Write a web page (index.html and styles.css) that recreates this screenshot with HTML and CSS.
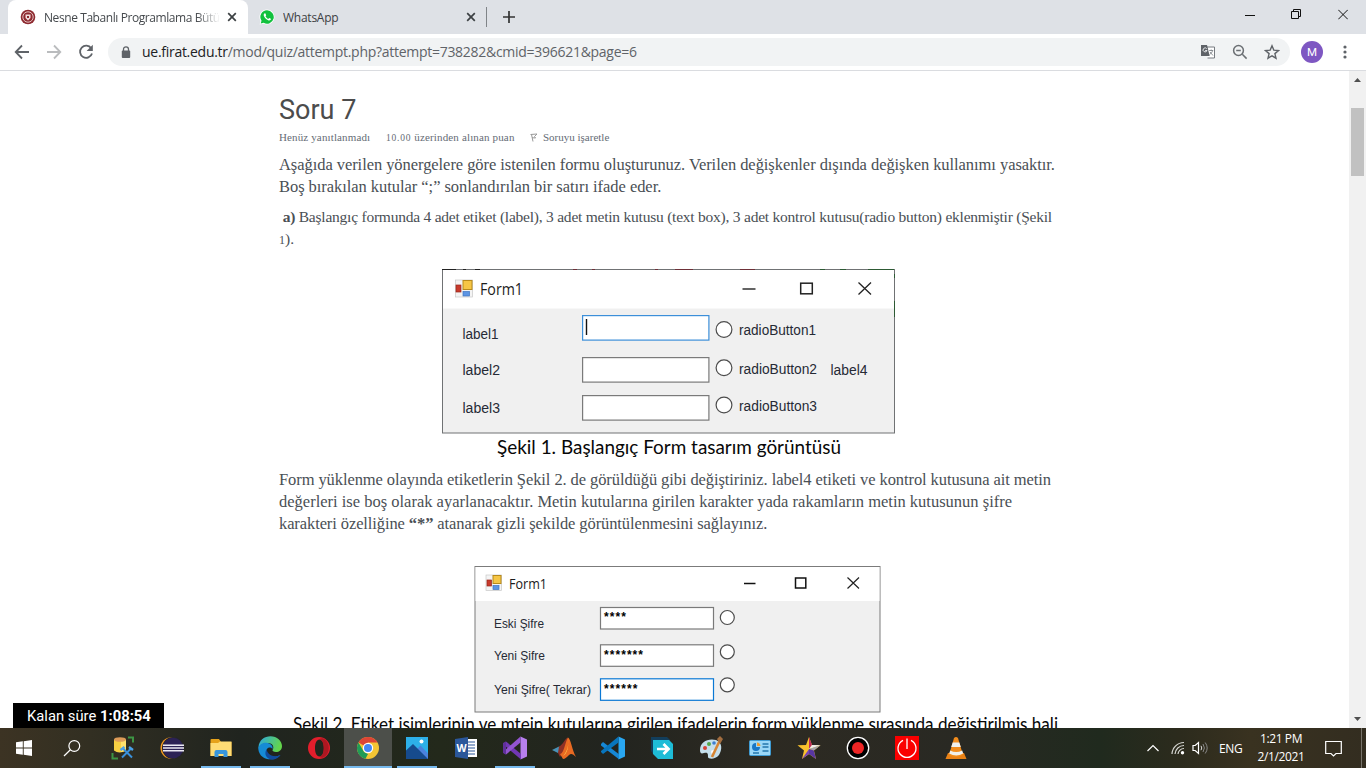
FILE: index.html
```html
<!DOCTYPE html>
<html lang="tr">
<head>
<meta charset="utf-8">
<title>Nesne Tabanlı Programlama</title>
<link rel="stylesheet" href="styles.css">
</head>
<body>
<div class="screen">
  <header class="tabs">
    <div class="tab active">
      <svg width="16" height="16" viewBox="0 0 16 16"><circle cx="8" cy="8" r="7.3" fill="#8e2a30"/><circle cx="8" cy="8" r="5.2" fill="none" stroke="#e3c2c2" stroke-width="1"/><path d="M5.5 5.5h5v3.5L8 11.5 5.5 9z" fill="#f1dede"/><path d="M7 7h2v2H7z" fill="#8e2a30"/></svg>
      <span class="tab-title fade">Nesne Tabanlı Programlama Bütü</span>
      <svg class="x" width="10" height="10" viewBox="0 0 10 10"><path d="M1.2 1.2l7.6 7.6M8.8 1.2L1.2 8.8"/></svg>
    </div>
    <div class="tab second">
      <svg width="16" height="16" viewBox="0 0 16 16"><path d="M8 .5A7.5 7.5 0 0 1 8 15.5Q6 15.500 4.500 14.700L.6 15.600 1.600 11.900A7.500 7.500 0 0 1 8 .5z" fill="#fff"/><path d="M8 1.300A6.700 6.700 0 1 1 4.700 13.800L1.700 14.600 2.500 11.700A6.700 6.700 0 0 1 8 1.300z" fill="#12c13e"/><path d="M5.700 4.300c-1.300.7-1.200 2.200-.4 3.500 1 1.700 2.500 3.100 4.300 3.600 1.300.3 2.400-.5 2.300-1.600L10.100 8.900 9.300 9.900C8 9.400 7.100 8.500 6.500 7.300L7.200 6.400 6.500 4.500z" fill="#fff"/></svg>
      <span class="tab-title wa">WhatsApp</span>
      <svg class="x" width="10" height="10" viewBox="0 0 10 10"><path d="M1.200 1.200l7.600 7.600M8.800 1.200L1.200 8.800"/></svg>
    </div>
    <i class="tab-sep"></i>
    <svg class="plus" width="12" height="12" viewBox="0 0 12 12"><path d="M6 0v12M0 6h12"/></svg>
    <div class="win-ctl">
      <svg width="10" height="11" viewBox="0 0 10 11"><path d="M0 6.500h10"/></svg>
      <svg width="11" height="11" viewBox="0 0 11 11"><path d="M.5 2.500h7v7h-7zM2.500 2.500V.5h7v7h-2"/></svg>
      <svg width="10" height="11" viewBox="0 0 10 11"><path d="M.3.800l9.500 9.500M9.800.800L.3 10.300"/></svg>
    </div>
  </header>

  <nav class="toolbar">
    <svg class="nav back" width="16" height="16" viewBox="0 0 16 16"><path d="M15 8H2M8 1.500L1.700 8 8 14.500"/></svg>
    <svg class="nav fwd" width="16" height="16" viewBox="0 0 16 16"><path d="M1 8h13M8 1.500L14.300 8 8 14.500"/></svg>
    <svg class="nav" width="16" height="16" viewBox="0 0 16 16"><path d="M13.200 4.300A6.100 6.100 0 1 0 14 9.600"/><path d="M14.800.8v6.200H8.600z" fill="#5f6368" stroke="none"/></svg>
    <div class="omnibox">
      <svg width="10" height="13" viewBox="0 0 10 13"><path d="M2.500 5.500V3.300a2.500 2.500 0 0 1 5 0v2.200" fill="none" stroke="#5f6368" stroke-width="1.300"/><rect x=".8" y="4.600" width="8.400" height="7.400" rx=".9" fill="#5f6368"/></svg>
      <span class="url"><b>ue.firat.edu.tr</b>/mod/quiz/attempt.php?attempt=738282&amp;cmid=396621&amp;page=6</span>
      <div class="omni-icons">
        <svg width="16" height="16" viewBox="0 0 16 16"><path d="M7 3h7.500v11H7.500" fill="#fff" stroke="#777b80"/><path d="M1 1h6l2.700 11H1z" fill="#5f6368"/><path d="M6.700 4.700A2 2 0 1 0 7 6.500H5.200" fill="none" stroke="#e8eaed"/><path d="M9.200 6.500h4M11.200 5.500v1M12.600 6.500c-.5 2-1.600 3-3 4M10 8l3 3.500" fill="none" stroke="#80858a" stroke-width=".9"/></svg>
        <svg width="16" height="16" viewBox="0 0 16 16"><g fill="none" stroke="#6b6f73" stroke-width="1.500"><circle cx="6.500" cy="6.500" r="4.900"/><path d="M10.300 10.300l4.300 4.300M4.200 6.500h4.600"/></g></svg>
        <svg width="16" height="16" viewBox="0 0 16 16"><path d="M8 1.800l1.800 4.300 4.700.4-3.600 3.100 1.100 4.600L8 11.800l-4 2.400 1.100-4.600L1.500 6.500l4.700-.4z" fill="none" stroke="#5f6368" stroke-width="1.400"/></svg>
      </div>
    </div>
    <span class="avatar">M</span>
    <svg class="dots" width="4" height="14" viewBox="0 0 4 14"><circle cx="2" cy="2" r="1.600"/><circle cx="2" cy="7" r="1.600"/><circle cx="2" cy="12" r="1.600"/></svg>
  </nav>

  <div class="viewport">
    <main class="page">
      <h1>Soru 7</h1>
      <div class="info"><span class="i1">Henüz yanıtlanmadı</span><span class="i2"><small>10.00</small> üzerinden alınan puan</span><span class="i3"><svg width="8" height="9" viewBox="0 0 8 9"><path d="M.5 1.500L7 1 4.500 3.500 5.500 5 2 4.700M1.500 1.500L3 8.500" fill="none" stroke="#999"/></svg>Soruyu işaretle</span></div>
      <p><span class="l1">Aşağıda verilen yönergelere göre istenilen formu oluşturunuz. Verilen değişkenler dışında değişken kullanımı yasaktır.</span><br><span class="l2">Boş bırakılan kutular “;” sonlandırılan bir satırı ifade eder.</span></p>
      <p class="item"><span class="l3">&nbsp;<b>a)</b> Başlangıç formunda 4 adet etiket (label), 3 adet metin kutusu (text box), 3 adet kontrol kutusu(radio button) eklenmiştir (Şekil</span><br><span class="l4"><small>1</small>).</span></p>

      <svg class="fig fig1" width="454" height="199" viewBox="442 269 454 199">
        <rect x="442.500" y="269.500" width="452" height="163.500" fill="#f0f0f0" stroke="#707274"/>
        <rect x="443" y="270" width="451" height="38.500" fill="#fff"/>
        <path d="M442 269.500h14M463 269.500h3M475 269.500h5" stroke="#222"/><path d="M573 269.500h4M592 269.500h3M655 269.500h3M675 269.500h18M740 269.500h15" stroke="#6e3038"/><path d="M820 269.500h5M840 269.500h6M868 269.500h26M894.500 274v4M894.500 301v16" stroke="#2d5a34"/>
        <g><rect x="455.500" y="280" width="17" height="17" fill="#f4f4f4" stroke="#c8c8c8" stroke-width=".7"/><rect x="463" y="280.500" width="9" height="9" fill="#f6c645" stroke="#b88a1c"/><rect x="456" y="285" width="5" height="7" fill="#c83a2c" stroke="#97251c" stroke-width=".7"/><rect x="463" y="291.500" width="6.500" height="4.500" fill="#5d95e4" stroke="#3f74c0" stroke-width=".7"/></g>
        <g class="ui" font-size="15.500"><text x="480" y="294.500" textLength="43" lengthAdjust="spacingAndGlyphs">Form1</text></g>
        <path d="M742.500 289h13" stroke="#222" stroke-width="1.400"/><rect x="800.700" y="283.200" width="11.600" height="10.600" fill="none" stroke="#222" stroke-width="1.500"/><path d="M858.500 282.500l12.500 12M871 282.500l-12.500 12" stroke="#222" stroke-width="1.300"/>
        <g fill="#fff" stroke="#7a7a7a" stroke-width="1.200"><rect x="582.600" y="315.600" width="126.300" height="24.500" stroke="#3c8fd9"/><rect x="582.600" y="357.600" width="126.300" height="24.500"/><rect x="582.600" y="395.600" width="126.300" height="24.500"/></g>
        <path d="M586.500 319v16" stroke="#111" stroke-width="1.400"/>
        <g fill="#fff" stroke="#4c4c4c" stroke-width="1.200"><circle cx="724" cy="329.500" r="7.900"/><circle cx="724" cy="367.800" r="7.900"/><circle cx="724" cy="405" r="7.900"/></g>
        <g class="form-text" font-size="15.500">
          <text x="462.500" y="339" textLength="36" lengthAdjust="spacingAndGlyphs">label1</text><text x="462.500" y="375" textLength="37.500" lengthAdjust="spacingAndGlyphs">label2</text><text x="462.500" y="413" textLength="37.500" lengthAdjust="spacingAndGlyphs">label3</text>
          <text x="739" y="335" textLength="77" lengthAdjust="spacingAndGlyphs">radioButton1</text><text x="739" y="373.500" textLength="78" lengthAdjust="spacingAndGlyphs">radioButton2</text><text x="739" y="410.500" textLength="78" lengthAdjust="spacingAndGlyphs">radioButton3</text>
          <text x="830.500" y="375" textLength="37" lengthAdjust="spacingAndGlyphs">label4</text>
        </g>
        <text class="caption" x="497" y="454" textLength="344" lengthAdjust="spacingAndGlyphs">Şekil 1. Başlangıç Form tasarım görüntüsü</text>
      </svg>

      <p class="load"><span class="l5">Form yüklenme olayında etiketlerin Şekil 2. de görüldüğü gibi değiştiriniz. label4 etiketi ve kontrol kutusuna ait metin</span><br><span class="l6">değerleri ise boş olarak ayarlanacaktır. Metin kutularına girilen karakter yada rakamların metin kutusunun şifre</span><br><span class="l7">karakteri özelliğine <b>“*”</b> atanarak gizli şekilde görüntülenmesini sağlayınız.</span></p>

      <svg class="fig fig2" width="780" height="180" viewBox="285 566 780 180">
        <rect x="475" y="566.500" width="405" height="145.500" fill="#f0f0f0" stroke="#7b7b7b"/>
        <rect x="475.500" y="567" width="404" height="34" fill="#fff"/>
        <g><rect x="486" y="575" width="15.500" height="15.500" fill="#f4f4f4" stroke="#c8c8c8" stroke-width=".7"/><rect x="493" y="575.500" width="8" height="8" fill="#f6c645" stroke="#b88a1c"/><rect x="487" y="580" width="4.500" height="6" fill="#c83a2c" stroke="#97251c" stroke-width=".7"/><rect x="493" y="585.500" width="6" height="4" fill="#5d95e4" stroke="#3f74c0" stroke-width=".7"/></g>
        <g class="ui" font-size="14"><text x="509" y="588.500" textLength="38" lengthAdjust="spacingAndGlyphs">Form1</text></g>
        <path d="M744 583.500h11.500" stroke="#111" stroke-width="1.500"/><rect x="795.500" y="578" width="10.300" height="10" fill="none" stroke="#111" stroke-width="1.500"/><path d="M847.500 577.500l11.500 11M859 577.500l-11.500 11" stroke="#222" stroke-width="1.200"/>
        <g fill="#fff" stroke="#7a7a7a" stroke-width="1.200"><rect x="600.500" y="607.500" width="113" height="21.500"/><rect x="600.500" y="644.800" width="113" height="21.500"/><rect x="600.500" y="678.800" width="113" height="21.500" stroke="#0a78d4"/></g>
        <g fill="#fff" stroke="#4c4c4c" stroke-width="1.200"><circle cx="727.300" cy="617.500" r="7"/><circle cx="727.300" cy="651.800" r="7"/><circle cx="727.300" cy="684.800" r="7"/></g>
        <g class="form-text" font-size="13.500">
          <text x="494" y="628" textLength="50" lengthAdjust="spacingAndGlyphs">Eski Şifre</text><text x="494" y="660" textLength="51" lengthAdjust="spacingAndGlyphs">Yeni Şifre</text><text x="494" y="694" textLength="97" lengthAdjust="spacingAndGlyphs">Yeni Şifre( Tekrar)</text>
        </g>
        <g class="stars" font-size="12"><text x="604" y="621" textLength="22">****</text><text x="604" y="658.500" textLength="39">*******</text><text x="604" y="692.500" textLength="33.500">******</text></g>
        <text class="caption" x="293" y="731" textLength="765" lengthAdjust="spacingAndGlyphs">Şekil 2. Etiket isimlerinin ve mtein kutularına girilen ifadelerin form yüklenme sırasında değiştirilmiş hali</text>
      </svg>
    </main>
    <aside class="scroll"><svg width="7" height="4" viewBox="0 0 7 4"><path d="M0 4l3.500-4L7 4z"/></svg><i></i><svg class="down" width="7" height="4" viewBox="0 0 7 4"><path d="M0 0l3.500 4L7 0z"/></svg></aside>
    <div class="timer"><span>Kalan süre <b>1:08:54</b></span></div>
  </div>

  <footer class="taskbar">
    <div class="task start"><svg width="16" height="16" viewBox="0 0 16 16"><path d="M0 2.300L6.800 1.300v6.300H0zM7.700 1.200L16 0v7.600H7.700zM0 8.500h6.800v6.300L0 13.800zM7.700 8.500H16V16l-8.300-1.200z" fill="#fff"/></svg></div>
    <div class="task search"><svg width="18" height="18" viewBox="0 0 18 18"><g fill="none" stroke="#fff" stroke-width="1.200"><circle cx="11.300" cy="7" r="5.400"/><path d="M7.400 10.800L1 17"/></g></svg></div>
    <div class="task"><svg width="24" height="24" viewBox="0 0 24 24"><path d="M3 3.500v11q5 4 12 0v-11" fill="#f6cf42"/><path d="M10 4h5v11l-5 1z" fill="#ffe06b"/><ellipse cx="9" cy="3.500" rx="6" ry="2.300" fill="#dd9b58"/><path d="M17 1.500h5v5M1.500 17v5.500H7" fill="none" stroke="#3d9544" stroke-width="2"/><path d="M11 21.500L20 12.500M12 12.500l9 9" stroke="#3a91dc" stroke-width="2"/><path d="M9.500 14l4-3M18 11l4 3" stroke="#4aa1e8" stroke-width="2.300"/></svg></div>
    <div class="task"><svg width="24" height="24" viewBox="0 0 24 24"><circle cx="11.300" cy="12" r="10.800" fill="#f59a23"/><circle cx="13" cy="12" r="11" fill="#242529"/><circle cx="13" cy="12" r="10.300" fill="#2c2255"/><path d="M3 9.300h21M3 12h21M3 14.700h21" stroke="#eceaf4" stroke-width="1.600"/></svg></div>
    <div class="task open"><svg width="24" height="24" viewBox="0 0 24 24"><path d="M1.500 4Q1.500 3 2.500 3H10l2 3h10.500v14h-21z" fill="#e6a21b"/><path d="M1.500 7H9l2-1.500h11.500V20h-21z" fill="#ffdc75"/><path d="M5.500 21v-5q0-2 2-2h9q2 0 2 2v5h-4v-3h-5v3z" fill="#3996dc"/></svg></div>
    <div class="task open"><svg width="24" height="24" viewBox="0 0 24 24"><defs><linearGradient id="edge" x1="0" x2="1" y2=".3"><stop stop-color="#2ca7e3"/><stop offset="1" stop-color="#63d54c"/></linearGradient></defs><path d="M.5 11C1 4 6.500.2 12.500.2 19 .2 24 5 24 10c0 4-3 6-6 6-2.500 0-4-1.300-3.500-2 2-2.500.5-7-4.500-7C5 7 1.500 9 .5 13z" fill="url(#edge)"/><path d="M.3 13c0-4 4.700-7 9.500-6 4 1 5.500 4 4.500 6-1-2-4.300-2-5.500.2-2 4 2 7.500 7.200 7.500 2 0 4.500-.8 6-1.800C17 26 1.500 25 .3 13z" fill="#168bd5"/><path d="M8.500 13.500c-3 5 .5 9.500 5.500 10 3 .2 7-2 8.500-4.600-6 3-12.500.6-14-5.400z" fill="#104b9d"/></svg></div>
    <div class="task"><svg width="24" height="24" viewBox="0 0 24 24"><path fill-rule="evenodd" d="M12 1a11 11 0 1 0 0 22 11 11 0 1 0 0-22zM12.500 3.500c3 0 4.300 4 4.300 8.500s-1.300 8.500-4.300 8.500S8 16.500 8 12s1.500-8.500 4.500-8.500z" fill="#e21e2c"/><path d="M12 3.500q2-1.600 4-1.200a11 11 0 0 1 0 19.400q-2 .4-4-1.200c3 0 4.800-3.500 4.800-8.500S15 3.500 12 3.500z" fill="#ad1721"/></svg></div>
    <div class="task current"><svg width="24" height="24" viewBox="0 0 24 24"><circle cx="12" cy="12" r="11" fill="#f4c534"/><path d="M12 12L2.500 6.500A11 11 0 0 1 21.600 6.600H12z" fill="#dc4536"/><path d="M2.500 6.500L8 16l4 2-2.500 4.800A11 11 0 0 1 2.500 6.500z" fill="#219b57"/><circle cx="12" cy="12" r="5.200" fill="#fff"/><circle cx="12" cy="12" r="4" fill="#4487f4"/></svg></div>
    <div class="task open"><svg width="24" height="24" viewBox="0 0 24 24"><path d="M1 1h22v22H1z" fill="#2db0e9"/><path d="M12 13l3.500-3.500 7.500 8V23H12z" fill="#4b82dd"/><path d="M1 14.500L8 8l15 15H1z" fill="#164b8d"/><circle cx="16.500" cy="5.500" r="2" fill="#fff"/></svg></div>
    <div class="task"><svg width="24" height="24" viewBox="0 0 24 24"><path d="M12 3h11v18H12z" fill="#fff"/><path d="M13 6h8M13 9h8M13 12h8M13 15h8M13 18h8" stroke="#2b579a" stroke-width="1.200"/><path d="M1 3l13-2v22L1 21z" fill="#2b579a"/><text x="7.500" y="15.800" text-anchor="middle" font-family="Open Sans, sans-serif" font-size="10.500" font-weight="700" fill="#fff">W</text></svg></div>
    <div class="task open"><svg width="24" height="24" viewBox="0 0 24 24"><path d="M17.500.5L24 3.500v17l-6.500 3z" fill="#b780ee"/><path d="M1 7l2-1.500L18 18v5.500L1 9z" fill="#7137b5"/><path d="M17.500.5v6L3 18.500 1 17v-2z" fill="#9355d1"/><path d="M0 7l3-1.500v13L0 17z" fill="#60309b"/></svg></div>
    <div class="task"><svg width="24" height="24" viewBox="0 0 24 24"><path d="M0 14l7-3.500 3.500 3L6 17z" fill="#4a91b6"/><path d="M7 10.500C11 9 13 2 16 1.500L13 14l-5 7-2-4z" fill="#8d3025"/><path d="M16 1.500C19 3 20 14 24 21c-3-3-5-4-7-2-2 2-4 4-6 4l-3-5c4 0 5-12 8-16.500z" fill="#e86a22"/><path d="M16 2c1 5 0 13-5 18 4-2 6-8 5-18z" fill="#ffc24c"/></svg></div>
    <div class="task"><svg width="24" height="24" viewBox="0 0 24 24"><path d="M17.500.5L24 3.500v17l-6.500 3z" fill="#29a7f2"/><path d="M0 8l2-2 16 12.300v5L0 9.500z" fill="#1687d5"/><path d="M17.500.5v6L2 18 0 16v-1z" fill="#0875bd"/></svg></div>
    <div class="task"><svg width="24" height="24" viewBox="0 0 24 24"><path d="M1 1h16l3 3v14H3l-2-3z" fill="#123e5c"/><path d="M3 4h16l4 4v15H8l-5-5z" fill="#1ebcd7"/><path d="M7 13h11M13.500 8l5 5-5 5" fill="none" stroke="#fff" stroke-width="2.700"/></svg></div>
    <div class="task"><svg width="24" height="24" viewBox="0 0 24 24"><path d="M1 14C1 6 9 2 17 4c7 3 6 10 3 15-4 5-11 4-11 2 0-3 0-5-4-4-3 1-4 0-4-3z" fill="#c5dfec"/><circle cx="6" cy="12" r="2" fill="#d54537"/><circle cx="10" cy="8" r="2" fill="#54a84b"/><circle cx="15" cy="7" r="1.800" fill="#3e7ed0"/><circle cx="14" cy="16" r="2" fill="#fff"/><path d="M21 4L13 21" stroke="#d68534" stroke-width="2.600"/><path d="M18 3l3-3 3 3-3 5z" fill="#a36e40"/></svg></div>
    <div class="task"><svg width="24" height="24" viewBox="0 0 24 24"><rect x="1.500" y="4.500" width="21" height="15" rx="1" fill="#9ad7f7" stroke="#3e9bd3"/><path d="M8 7a4 4 0 1 0 4 4H8z" fill="#1977c6"/><path d="M9 6.500a4 4 0 0 1 3.500 3.500H9z" fill="#e99c37"/><path d="M14.500 8h6M14.500 11h6M5 17h6M14.500 15h6" stroke="#2477ac" stroke-width="1.500"/></svg></div>
    <div class="task"><svg width="24" height="24" viewBox="0 0 24 24"><path d="M12 1l3 8 8.500.3-6.600 5.300L19 23l-7-5-7 5 2-8.400L.5 9.300 9 9z" fill="#f9c22d"/><path d="M12 1l3 8-3 4z" fill="#c02a5f"/><path d="M23.500 9.300L12 13l3-4z" fill="#eee"/><path d="M23.500 9.300l-6.600 5.300L12 13z" fill="#a4a4ac"/><path d="M12 13l4.900 1.600L19 23l-7-5z" fill="#5836a2"/><path d="M5 23l7-10v5z" fill="#7646b4"/></svg></div>
    <div class="task"><svg width="24" height="24" viewBox="0 0 24 24"><circle cx="12" cy="12" r="10.700" fill="#000" stroke="#fff" stroke-width="1.300"/><circle cx="12" cy="12" r="6" fill="#ee2525"/></svg></div>
    <div class="task"><svg width="24" height="24" viewBox="0 0 24 24"><path d="M0 0h24v24H0z" fill="#fa0000"/><path d="M8 4.300a9 9 0 1 0 8 0M12 2.500V13" fill="none" stroke="#fff" stroke-width="1.300"/></svg></div>
    <div class="task"><svg width="24" height="24" viewBox="0 0 24 24"><path d="M4 17h16l2.500 6h-21z" fill="#e98216"/><path d="M10 2q2-2 4 0l5 17q-7 4-14 0z" fill="#f28c1c"/><path d="M8.700 6.500L15.300 6.500l1.500 4.500H7.200zM6.200 14.500l-1 3q7 4 14 0l-1-3q-6 3-12 0z" fill="#f0f0ec"/></svg></div>
    <div class="tray">
      <svg width="14" height="8" viewBox="0 0 14 8"><path d="M1.500 7L7 1.500 12.500 7" fill="none" stroke="#fff" stroke-width="1.200"/></svg>
      <svg class="wifi" width="14" height="14" viewBox="0 0 14 14"><g fill="none" stroke="#d8d8d4" stroke-width="1.200"><path d="M1 13A12 12 0 0 1 13 1.500M4 13a9 9 0 0 1 9-8.500M7 13a6 6 0 0 1 6-5.500"/></g><circle cx="11.500" cy="11.700" r="1.700" fill="#fff"/></svg>
      <svg class="sound" width="17" height="14" viewBox="0 0 17 14"><path d="M1 4.500h2.200L6.500 1.500v11L3.200 9.500H1z" fill="none" stroke="#fff" stroke-width="1.200"/><path d="M9 4.800q1.500 2.200 0 4.400" fill="none" stroke="#ddd"/><path d="M11 3q2.800 4 0 8M13.200 1.500q4 5.500 0 11" fill="none" stroke="#888"/></svg>
      <span class="lang">ENG</span>
      <div class="clock"><span>1:21 PM</span><span>2/1/2021</span></div>
      <svg class="note" width="17" height="17" viewBox="0 0 17 17"><path d="M.7 1.500h15.600v12H11L8.500 16 6 13.500H.7z" fill="none" stroke="#fff" stroke-width="1.200"/></svg>
      <i class="desk"></i>
    </div>
  </footer>
</div>
</body>
</html>
```
FILE: styles.css
```css
* { box-sizing: border-box; }
body { margin: 0; overflow: hidden; }
svg { display: block; flex: none; }
.screen { width: 1366px; height: 768px; display: flex; flex-direction: column; background: #fff; font-family: "Open Sans", "Noto Sans", sans-serif; }

/* Tab strip */
.tabs { height: 34px; flex: none; display: flex; align-items: center; background: #dee1e6; padding-left: 8px; }
.tab { height: 34px; display: flex; align-items: center; font-size: 12px; color: #3c4043; }
.tab.active { width: 240px; background: #fff; border-radius: 8px 8px 0 0; padding-left: 12px; color: #45494d; }
.tab.second { width: 238px; padding-left: 11px; }
.tab-title { margin-left: 8px; white-space: nowrap; overflow: hidden; letter-spacing: -.1px; }
.fade { width: 176px; letter-spacing: -.42px; -webkit-mask-image: linear-gradient(90deg, #000 152px, transparent 176px); }
.wa { width: 184px; letter-spacing: -.25px; }
.x { margin-left: 7px; stroke: #3c4043; stroke-width: 1.7; fill: none; }
.wa + .x { margin-left: -1px; }
.tab.active .x { margin-left: 7px; }
.tab-sep { width: 1px; height: 20px; background: #808488; }
.plus { margin-left: 16px; stroke: #333; stroke-width: 1.7; }
.win-ctl { margin-left: auto; display: flex; gap: 36px; padding: 0 18px 6px 0; fill: none; stroke: #111; }

/* Toolbar */
.toolbar { height: 37px; flex: none; display: flex; align-items: center; border-bottom: 1px solid #dadce0; padding: 0 19px 0 14px; background: #fff; }
.nav { fill: none; stroke: #5f6368; stroke-width: 1.8; margin-right: 16px; }
.fwd { stroke: #babcbe; }
.omnibox { margin-left: -2px; width: 1182px; height: 28px; border-radius: 14px; background: #f1f3f4; display: flex; align-items: center; padding: 0 10px 0 13px; }
.url { margin-left: 11px; font-size: 14px; line-height: 20px; color: #5f6368; white-space: nowrap; letter-spacing: -.28px; }
.url b { font-weight: 400; color: #202124; }
.omni-icons { margin-left: auto; display: flex; gap: 16px; }
.avatar { margin-left: 11px; width: 22px; height: 22px; border-radius: 50%; background: #7e57c2; color: #fff; text-align: center; font: 11.5px/22px Roboto, sans-serif; }
.dots { margin-left: auto; fill: #5f6368; }

/* Page area */
.viewport { height: 657px; flex: none; display: flex; position: relative; overflow: hidden; }
.page { width: 1349px; height: 657px; overflow: hidden; padding: 22px 0 0 279px; font-family: "Liberation Serif", serif; font-size: 16.5px; line-height: 22px; color: #4a4f55; white-space: nowrap; }
h1 { margin: 0 0 2px; font: 400 27px/34px Roboto, sans-serif; color: #4c4c4c; }
.info { height: 16px; margin-bottom: 9px; display: flex; font-size: 11px; line-height: 16px; color: #656c75; }
.i1 { width: 107px; letter-spacing: .13px; }
.i2 { width: 144px; letter-spacing: .15px; }
.i3 { display: flex; gap: 5px; align-items: center; }
.info small { font-size: 9.5px; letter-spacing: .8px; }
p { margin: 0; height: 44px; }
.l1 { letter-spacing: -.06px; }
.l2 { letter-spacing: -.05px; }
.l3 { letter-spacing: -.23px; }
.l5 { letter-spacing: -.09px; }
.l7 { letter-spacing: -.1px; }
.item { margin-top: 8px; font-size: 15.5px; }
.item small { font-size: 12px; }
.load { height: 66px; }
.fig1 { margin: 19px 0 0 163px; }
.load { padding-top: 1px; }
.fig2 { margin: 32px 0 0 6px; }
.ui { font-family: "Open Sans", sans-serif; fill: #1c1c1c; }
.form-text { font-family: "Liberation Sans", sans-serif; fill: #262a35; }
.stars { font-family: "Liberation Sans", sans-serif; font-weight: 700; fill: #000; }
.caption { font-family: Lato, sans-serif; font-size: 18.5px; fill: #080808; }
.scroll { width: 17px; background: #f1f1f1; display: flex; flex-direction: column; align-items: center; padding: 7px 0; fill: #505050; }
.scroll i { width: 13px; height: 68px; margin-top: 26px; background: #c1c1c1; }
.scroll .down { margin-top: auto; }
.timer { position: absolute; left: 13px; bottom: 0; width: 151px; height: 25px; background: #000; color: #fff; padding-left: 14px; font: 14.8px/26px Roboto, sans-serif; }

/* Taskbar */
.taskbar { height: 40px; flex: none; display: flex; background: linear-gradient(90deg, #3c3323 0, #322f22 90px, #20241f 240px, #23291b 440px, #22241f 610px, #2d2a22 760px, #292923 960px, #202a1e 1100px, #2c2b1d 1180px, #393220 1250px, #332d20 1366px); }
.task { width: 49.03px; flex: none; display: flex; align-items: center; justify-content: center; }
.task.start { width: 48px; }
.task.search { width: 50px; padding-right: 2px; }
.task.open { background: linear-gradient(#76b9ed, #76b9ed) 50% 100% / 40px 2px no-repeat; }
.task.current { background: linear-gradient(#76b9ed, #76b9ed) 50% 100% / 48px 2px no-repeat, linear-gradient(#4c4f4a, #4c4f4a) 50% 0 / 48px 40px no-repeat; }
.tray { margin-left: auto; display: flex; align-items: center; color: #fff; font-size: 12px; }
.wifi { margin-left: 11px; }
.sound { margin-left: 7px; }
.lang { width: 24px; margin-left: 10px; letter-spacing: -.4px; }
.clock { width: 50px; margin-left: 13px; display: flex; flex-direction: column; align-items: center; line-height: 18px; letter-spacing: -.4px; white-space: nowrap; }
.note { margin-left: 19px; }
.desk { width: 5px; height: 40px; margin-left: 19px; border-left: 1px solid #77736a; }
```
